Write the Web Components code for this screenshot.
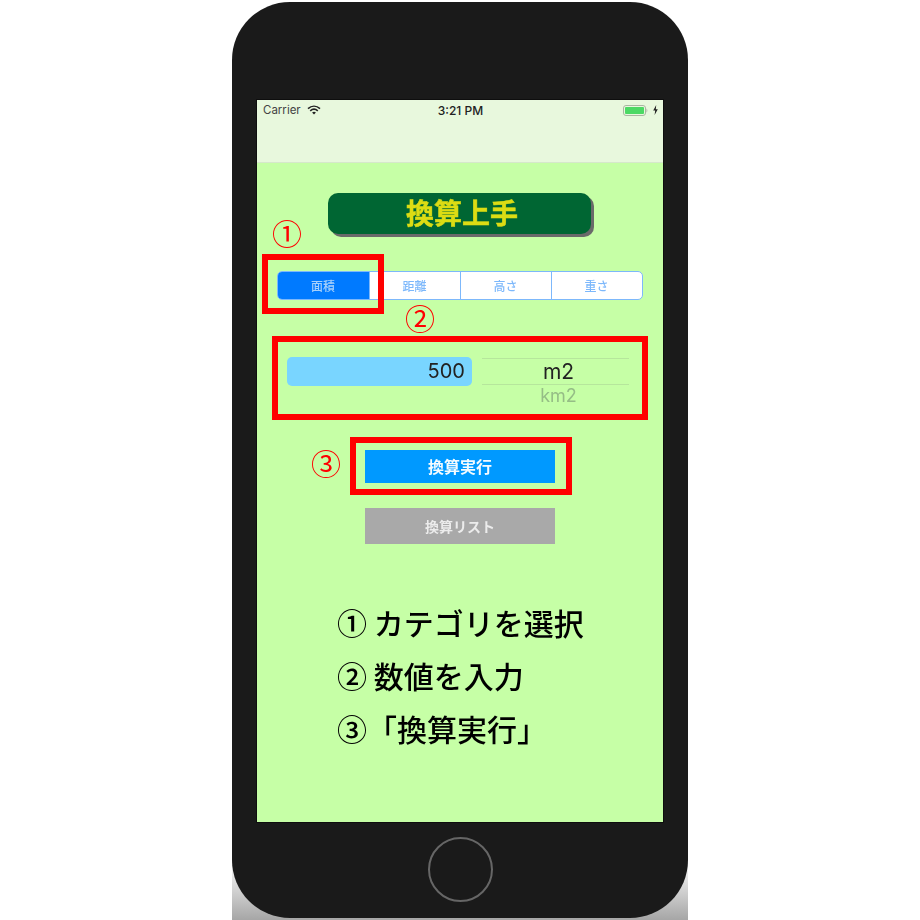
<!DOCTYPE html>
<html lang="ja">
<head>
<meta charset="utf-8">
<title>換算上手</title>
<style>
  html, body { margin: 0; padding: 0; background: #fff; }
  body { width: 920px; height: 920px; overflow: hidden; font-family: "Noto Sans CJK JP", "Liberation Sans", sans-serif; }
</style>
</head>
<body>
<phone-frame>
  <status-bar></status-bar>
  <app-title>換算上手</app-title>
  <segment-bar></segment-bar>
  <value-row value="500" unit="m2" next="km2"></value-row>
  <action-button kind="run">換算実行</action-button>
  <action-button kind="list">換算リスト</action-button>
  <step-list></step-list>

  <mark-box style="left:4.5px;top:154.5px;width:122px;height:60px"></mark-box>
  <mark-box style="left:14.5px;top:236.5px;width:376px;height:84px"></mark-box>
  <mark-box style="left:92.5px;top:337.5px;width:222px;height:58px"></mark-box>
  <circle-mark style="left:15px;top:112px">①</circle-mark>
  <circle-mark style="left:148px;top:197px">②</circle-mark>
  <circle-mark style="left:54px;top:342px">③</circle-mark>
</phone-frame>

<script>
class PhoneFrame extends HTMLElement {
   constructor() {
      super();
      this.shadowDOM = this.attachShadow({ mode: 'open' });
   }

   connectedCallback() {
      this.shadowDOM.innerHTML = `
         <style>
            * { box-sizing: border-box; }
            :host {
               display: block;
               box-sizing: border-box;
               width: 456px;
               height: 920px;
               margin: 0 auto;
               padding-top: 2px;
               background: linear-gradient(to bottom, #fff 0, #fff 850px, #ececec 872px, #a6a6a6 920px);
            }
            .body {
               height: 916px;
               padding-top: 97.5px;
               background: #1a1a1a;
               border-radius: 58px;
               display: flex;
               flex-direction: column;
               align-items: center;
            }
            .screen {
               position: relative;
               width: 406px;
               height: 722.5px;
               flex: none;
               background: #c6ffa6;
               box-shadow: 0 0 0 1px #0e0e0e;
               filter: blur(.35px);
            }
            .home {
               width: 65px;
               height: 65px;
               margin-top: 14.5px;
               border: 2.5px solid #666;
               border-radius: 50%;
               flex: none;
            }
         </style>
         <div class="body">
            <div class="screen"><slot></slot></div>
            <div class="home"></div>
         </div>
      `;
   }
}

class StatusBar extends HTMLElement {
   constructor() {
      super();
      this.shadowDOM = this.attachShadow({ mode: 'open' });
   }

   connectedCallback() {
      this.shadowDOM.innerHTML = `
         <style>
            :host {
               display: block;
               box-sizing: border-box;
               height: 63px;
               background: #e8f8dd;
               border-bottom: 1px solid #d6e8cb;
               font-family: Inter, "Liberation Sans", sans-serif;
               color: #444;
            }
            .row {
               display: flex;
               align-items: center;
               height: 21px;
               padding: 0 5px 0 6px;
               font-size: 11.5px;
            }
            .left { display: flex; align-items: center; gap: 6px; flex: 1; }
            .time {
               flex: 1;
               text-align: center;
               color: #222;
               font-weight: 500;
               font-size: 12px;
            }
            .right { display: flex; align-items: center; justify-content: flex-end; flex: 1; gap: 5px; }
            svg { display: block; }
         </style>
         <div class="row">
            <div class="left">
               <span>Carrier</span>
               <svg width="14" height="10" viewBox="0 0 14 10">
                  <path d="M1 3.6C4.6 .4 9.4 .4 13 3.6" fill="none" stroke="#222" stroke-width="1.6"/>
                  <path d="M3.2 5.8C5.4 3.9 8.6 3.9 10.8 5.8" fill="none" stroke="#222" stroke-width="1.6"/>
                  <path d="M5.1 7.6C6.2 6.6 7.8 6.6 8.9 7.6L7 9.6Z" fill="#222"/>
               </svg>
            </div>
            <span class="time">3:21 PM</span>
            <div class="right">
               <svg width="25" height="11" viewBox="0 0 25 11">
                  <rect x=".5" y=".5" width="22" height="10" rx="2.5" fill="none" stroke="#aab5a2"/>
                  <rect x="2" y="2" width="19" height="7" rx="1" fill="#4cd964"/>
                  <path d="M23.5 3.5C24.6 4 24.6 7 23.5 7.5Z" fill="#aab5a2"/>
               </svg>
               <svg width="5" height="10" viewBox="0 0 5 10">
                  <path d="M3.2 0L.2 5.6H2.2L1.6 10L4.8 4.2H2.8Z" fill="#222"/>
               </svg>
            </div>
         </div>
      `;
   }
}

class AppTitle extends HTMLElement {
   constructor() {
      super();
      this.shadowDOM = this.attachShadow({ mode: 'open' });
   }

   connectedCallback() {
      this.shadowDOM.innerHTML = `
         <style>
            :host {
               display: flex;
               align-items: center;
               justify-content: center;
               box-sizing: border-box;
               width: 263px;
               height: 41px;
               margin: 30px 0 0 70.5px;
               padding: 0 0 2px 6px;
               background: #006633;
               border-radius: 10px;
               box-shadow: 3px 3px 0 #6a6a6a;
               color: #dcdc14;
               font-family: "Noto Sans CJK JP", sans-serif;
               font-weight: 700;
               font-size: 28px;
               line-height: 1;
               -webkit-text-stroke: .5px #dcdc14;
            }
         </style>
         <slot></slot>
      `;
   }
}

class SegmentBar extends HTMLElement {
   constructor() {
      super();
      this.shadowDOM = this.attachShadow({ mode: 'open' });
   }

   connectedCallback() {
      this.shadowDOM.innerHTML = `
         <style>
            * { box-sizing: border-box; }
            :host {
               display: grid;
               grid-template-columns: repeat(4, 1fr);
               box-sizing: border-box;
               width: 366px;
               height: 29px;
               margin: 37px 0 0 19.5px;
               background: #fff;
               border: 1.5px solid #7db8fb;
               border-radius: 5px;
               overflow: hidden;
               font-family: "Noto Sans CJK JP", sans-serif;
               font-weight: 500;
               font-size: 12px;
               color: #7db8fb;
            }
            div {
               display: flex;
               align-items: center;
               justify-content: center;
               border-left: 1.5px solid #7db8fb;
            }
            .on { background: #007aff; color: #a6d0fb; border-left: 0; }
         </style>
         <div class="on">面積</div>
         <div>距離</div>
         <div>高さ</div>
         <div>重さ</div>
      `;
   }
}

class ValueRow extends HTMLElement {
   constructor() {
      super();
      this.shadowDOM = this.attachShadow({ mode: 'open' });
   }

   connectedCallback() {
      this.shadowDOM.innerHTML = `
         <style>
            * { box-sizing: border-box; }
            :host {
               display: flex;
               align-items: flex-start;
               gap: 10px;
               height: 93px;
               margin: 57px 0 0 30px;
               font-family: Inter, "Liberation Sans", sans-serif;
               color: #222;
            }
            .input {
               width: 185px;
               height: 29px;
               padding-right: 7px;
               background: #79d5ff;
               border-radius: 5px;
               font-size: 20px;
               line-height: 29px;
               text-align: right;
            }
            .picker { width: 147px; text-align: center; }
            .current {
               height: 27px;
               margin-top: 1px;
               border-top: 1px solid #b6e69c;
               border-bottom: 1px solid #b6e69c;
               font-size: 21px;
               line-height: 26px;
               padding-left: 6px;
            }
            .next {
               font-size: 18px;
               line-height: 21px;
               padding-left: 6px;
               color: #95bd86;
            }
         </style>
         <div class="input">${this.getAttribute('value')}</div>
         <div class="picker">
            <div class="current">${this.getAttribute('unit')}</div>
            <div class="next">${this.getAttribute('next')}</div>
         </div>
      `;
   }
}

class ActionButton extends HTMLElement {
   constructor() {
      super();
      this.shadowDOM = this.attachShadow({ mode: 'open' });
   }

   connectedCallback() {
      this.shadowDOM.innerHTML = `
         <style>
            :host {
               display: flex;
               align-items: center;
               justify-content: center;
               width: 190px;
               margin: 0 auto;
               font-family: "Noto Sans CJK JP", sans-serif;
               font-weight: 700;
            }
            :host([kind="run"]) {
               height: 33px;
               background: #0099ff;
               color: #f4fbff;
               font-size: 16px;
            }
            :host([kind="list"]) {
               height: 36px;
               margin-top: 25px;
               background: #a9a9a9;
               color: #ececec;
               font-size: 14px;
            }
         </style>
         <slot></slot>
      `;
   }
}

class StepList extends HTMLElement {
   constructor() {
      super();
      this.shadowDOM = this.attachShadow({ mode: 'open' });
   }

   connectedCallback() {
      this.shadowDOM.innerHTML = `
         <style>
            :host {
               display: flex;
               flex-direction: column;
               margin: 52px 0 0 80px;
               font-family: "Noto Sans CJK JP", sans-serif;
               font-weight: 500;
               font-size: 30px;
               line-height: 53px;
               color: #000;
               white-space: nowrap;
            }
         </style>
         <div>① カテゴリを選択</div>
         <div>② 数値を入力</div>
         <div>③「換算実行」</div>
      `;
   }
}

class MarkBox extends HTMLElement {
   constructor() {
      super();
      this.shadowDOM = this.attachShadow({ mode: 'open' });
   }

   connectedCallback() {
      this.shadowDOM.innerHTML = `
         <style>
            :host {
               position: absolute;
               box-sizing: border-box;
               border: 6px solid #ff0000;
            }
         </style>
      `;
   }
}

class CircleMark extends HTMLElement {
   constructor() {
      super();
      this.shadowDOM = this.attachShadow({ mode: 'open' });
   }

   connectedCallback() {
      this.shadowDOM.innerHTML = `
         <style>
            :host {
               position: absolute;
               font-family: "Noto Sans CJK JP", sans-serif;
               font-size: 30px;
               line-height: 40px;
               color: #ff0000;
            }
         </style>
         <slot></slot>
      `;
   }
}

customElements.define('phone-frame', PhoneFrame);
customElements.define('status-bar', StatusBar);
customElements.define('app-title', AppTitle);
customElements.define('segment-bar', SegmentBar);
customElements.define('value-row', ValueRow);
customElements.define('action-button', ActionButton);
customElements.define('step-list', StepList);
customElements.define('mark-box', MarkBox);
customElements.define('circle-mark', CircleMark);
</script>
</body>
</html>
